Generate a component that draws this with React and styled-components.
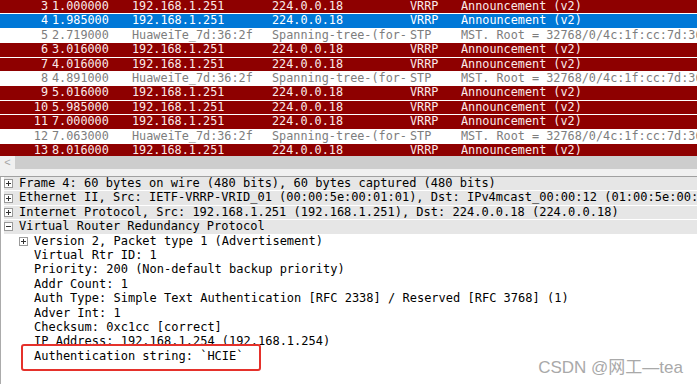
import React from 'react'
import styled, { createGlobalStyle } from 'styled-components'

const GlobalStyle = createGlobalStyle`
    html, body {
        margin: 0;
        padding: 0;
        background: #fff;
        overflow: hidden;
    }
`

const Window = styled.div`
    position: relative;
    width: 697px;
    height: 384px;
    display: flex;
    flex-direction: column;
    overflow: hidden;
    font-family: "DejaVu Sans Mono", "Liberation Mono", monospace;
    font-size: 12px;
`

const PacketList = styled.div`
    height: 156px;
    overflow: hidden;
    flex-shrink: 0;
`

const rowColours = {
    vrrp: { bg: '#8e0000', fg: '#fbeaea' },
    selected: { bg: '#0078d7', fg: '#ffffff' },
    stp: { bg: '#ffffff', fg: '#7d7d7d' },
}

const PacketRow = styled.div`
    box-sizing: border-box;
    height: 14.4px;
    line-height: 13.4px;
    display: grid;
    grid-template-columns: 48px 84px 140px 135px 54px 1fr;
    border-bottom: 1px solid #fff;
    background: ${(props) => rowColours[props.kind].bg};
    color: ${(props) => rowColours[props.kind].fg};
    white-space: nowrap;
    font-size: 11.8px;
`

const Cell = styled.span`
    overflow: hidden;
    text-overflow: clip;
    text-align: ${(props) => props.right ? 'right' : 'left'};
    padding-left: ${(props) => props.pad || 0}px;
`

const ScrollBar = styled.div`
    height: 13px;
    display: flex;
    flex-shrink: 0;
`

const ArrowButton = styled.div`
    width: 15px;
    background: #f0f0f0;
    color: #a6a6a6;
    font-family: "Liberation Sans", sans-serif;
    font-size: 11px;
    line-height: 13px;
    text-align: center;
`

const Thumb = styled.div`
    flex: 1;
    background: #cdcdcd;
`

const Splitter = styled.div`
    height: 7px;
    flex-shrink: 0;
    background: #f0f0f0;
    border-bottom: 1px solid #a0a0a0;
`

const DetailPane = styled.div`
    flex: 1;
    border-left: 1px solid #ababab;
    padding-left: 3px;
    color: #000;
`

const TreeRow = styled.div`
    position: relative;
    box-sizing: border-box;
    height: 14.4px;
    line-height: 13.4px;
    display: flex;
    align-items: center;
    padding-left: ${(props) => props.depth * 15}px;
    background: ${(props) => props.shade ? '#e6e6e6' : 'transparent'};
    border-bottom: 1px solid #fff;
    white-space: nowrap;
`

const Spacer = styled.span`
    width: 15px;
    flex-shrink: 0;
`

const Box = styled.svg`
    width: 9px;
    height: 9px;
    margin-right: 6px;
    flex-shrink: 0;
`

const Marked = styled.span`
    position: relative;
    &::after {
        content: '';
        position: absolute;
        left: -13px;
        right: -17px;
        top: -6px;
        bottom: -8px;
        border: 2px solid #e5312b;
        border-radius: 3px;
    }
`

const Watermark = styled.div`
    position: absolute;
    right: 14px;
    bottom: 6px;
    font-family: "Liberation Sans", "Noto Sans CJK SC", sans-serif;
    font-size: 17px;
    color: #a9a9a9;
`

const Expander = ({ open }) => (
    <Box viewBox="0 0 9 9">
        <rect x="0.5" y="0.5" width="8" height="8" fill="#fff" stroke="#9a9a9a" />
        <line x1="2" y1="4.5" x2="7" y2="4.5" stroke="#333" />
        {!open && <line x1="4.5" y1="2" x2="4.5" y2="7" stroke="#333" />}
    </Box>
)

const packets = [
    [3, '1.000000', 'vrrp'],
    [4, '1.985000', 'selected'],
    [5, '2.719000', 'stp'],
    [6, '3.016000', 'vrrp'],
    [7, '4.016000', 'vrrp'],
    [8, '4.891000', 'stp'],
    [9, '5.016000', 'vrrp'],
    [10, '5.985000', 'vrrp'],
    [11, '7.000000', 'vrrp'],
    [12, '7.063000', 'stp'],
    [13, '8.016000', 'vrrp'],
]

const tree = [
    { depth: 0, shade: true, box: 'closed', text: 'Frame 4: 60 bytes on wire (480 bits), 60 bytes captured (480 bits)' },
    { depth: 0, shade: true, box: 'closed', text: 'Ethernet II, Src: IETF-VRRP-VRID_01 (00:00:5e:00:01:01), Dst: IPv4mcast_00:00:12 (01:00:5e:00:00:12)' },
    { depth: 0, shade: true, box: 'closed', text: 'Internet Protocol, Src: 192.168.1.251 (192.168.1.251), Dst: 224.0.0.18 (224.0.0.18)' },
    { depth: 0, shade: true, box: 'open', text: 'Virtual Router Redundancy Protocol' },
    { depth: 1, box: 'closed', text: 'Version 2, Packet type 1 (Advertisement)' },
    { depth: 1, text: 'Virtual Rtr ID: 1' },
    { depth: 1, text: 'Priority: 200 (Non-default backup priority)' },
    { depth: 1, text: 'Addr Count: 1' },
    { depth: 1, text: 'Auth Type: Simple Text Authentication [RFC 2338] / Reserved [RFC 3768] (1)' },
    { depth: 1, text: 'Adver Int: 1' },
    { depth: 1, text: 'Checksum: 0xc1cc [correct]' },
    { depth: 1, text: 'IP Address: 192.168.1.254 (192.168.1.254)' },
    { depth: 1, mark: true, text: 'Authentication string: `HCIE`' },
]

export default function App() {
    return (
        <Window>
            <GlobalStyle />
            <PacketList>
                {packets.map(([no, time, kind]) => {
                    const stp = kind === 'stp'
                    return (
                        <PacketRow key={no} kind={kind}>
                            <Cell right>{no}</Cell>
                            <Cell pad={4}>{time}</Cell>
                            <Cell>{stp ? 'HuaweiTe_7d:36:2f' : '192.168.1.251'}</Cell>
                            <Cell>{stp ? 'Spanning-tree-(for-bridges)_00' : '224.0.0.18'}</Cell>
                            <Cell pad={3}>{stp ? 'STP' : 'VRRP'}</Cell>
                            <Cell>{stp ? 'MST. Root = 32768/0/4c:1f:cc:7d:36:2f  Cost = 0  Port = 0x8001' : 'Announcement (v2)'}</Cell>
                        </PacketRow>
                    )
                })}
            </PacketList>
            <ScrollBar>
                <ArrowButton>&lt;</ArrowButton>
                <Thumb />
            </ScrollBar>
            <Splitter />
            <DetailPane>
                {tree.map((row, i) => (
                    <TreeRow key={i} depth={row.depth} shade={row.shade}>
                        {row.box ? <Expander open={row.box === 'open'} /> : <Spacer />}
                        {row.mark ? <Marked>{row.text}</Marked> : row.text}
                    </TreeRow>
                ))}
            </DetailPane>
            <Watermark>CSDN @网工—tea</Watermark>
        </Window>
    )
}
